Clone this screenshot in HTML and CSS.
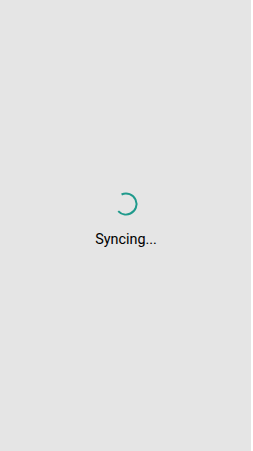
FILE: index.html
```html
<!DOCTYPE html>
<html>
<head>
<meta charset="utf-8">
<link rel="stylesheet" href="styles.css">
</head>
<body>
<div class="panel">
  <div class="loader">
    <svg class="spinner" width="26" height="26" viewBox="0 0 26 26">
      <circle cx="13" cy="13" r="10.5" fill="none" stroke="#1f9a8c" stroke-width="2" stroke-dasharray="46 20" transform="rotate(-115 13 13)"/>
    </svg>
    <div class="label">Syncing...</div>
  </div>
</div>
</body>
</html>
```
FILE: styles.css
```css
html, body {
  margin: 0;
  padding: 0;
  background: #ffffff;
}
.panel {
  width: 251px;
  height: 451px;
  background: #e5e5e5;
  display: flex;
  align-items: center;
  justify-content: center;
  box-sizing: border-box;
  padding-bottom: 13px;
  padding-left: 1px;
}
.loader {
  display: flex;
  flex-direction: column;
  align-items: center;
  gap: 14px;
}
.spinner {
  display: block;
}
.label {
  font-family: Roboto, "Liberation Sans", sans-serif;
  font-size: 14.4px;
  line-height: 17px;
  color: #000;
}
```
